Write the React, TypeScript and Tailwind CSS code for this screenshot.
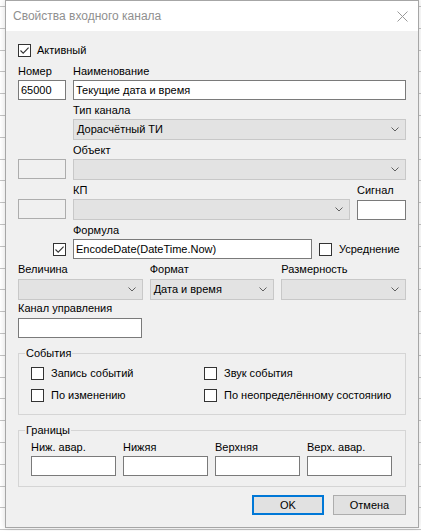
import type { ReactNode } from 'react'

const font = "font-['Segoe_UI','Liberation_Sans',Arial,sans-serif]"

function Check({ checked = false }: { checked?: boolean }) {
  return (
    <span className="w-[13px] h-[13px] border border-[#333333] bg-white flex-shrink-0 flex items-center justify-center">
      {checked && (
        <svg width="11" height="11" viewBox="0 0 11 11" fill="none">
          <path d="M1.5 5.5 L4.2 8.2 L9.6 2.6" stroke="#333333" strokeWidth="1.1" />
        </svg>
      )}
    </span>
  )
}

function Chevron() {
  return (
    <svg width="8" height="5" viewBox="0 0 8 5" fill="none" className="flex-shrink-0">
      <path d="M0.5 0.5 L4 4 L7.5 0.5" stroke="#606060" strokeWidth="1" />
    </svg>
  )
}

function Combo({ value, className = '' }: { value?: string; className?: string }) {
  return (
    <div className={`h-[21px] bg-[#e3e3e3] border border-[#c8c8c8] flex items-center justify-between pl-[3px] pr-[6px] ${className}`}>
      <span>{value}</span>
      <Chevron />
    </div>
  )
}

function TextBox({ value, className = '' }: { value?: string; className?: string }) {
  return (
    <div className={`h-[20px] bg-white border border-[#7a7a7a] flex items-center px-[2px] ${className}`}>
      {value}
    </div>
  )
}

function Label({ children, className = '' }: { children?: ReactNode; className?: string }) {
  return <div className={`h-[15px] leading-[15px] ${className}`}>{children}</div>
}

function CheckLabel({ label, checked }: { label: string; checked?: boolean }) {
  return (
    <div className="h-[16px] flex items-center gap-[7px]">
      <Check checked={checked} />
      <span className="leading-[15px]">{label}</span>
    </div>
  )
}

export default function App() {
  return (
    <div className={`w-[421px] h-[531px] overflow-hidden bg-white bg-[repeating-linear-gradient(to_bottom,transparent_0,transparent_6px,#c4c4c4_6px,#c4c4c4_7px,transparent_7px,transparent_21.8px)] ${font} text-[11px] text-black`}>
      <div className="ml-[5px] w-[414px] h-[528px] border border-[#a6a6a6] bg-[#f0f0f0] shadow-[0_0_6px_rgba(0,0,0,0.15)] flex flex-col">
        {/* title bar */}
        <div className="h-[30px] bg-white flex items-center justify-between pl-[7px] pr-[10px] flex-shrink-0">
          <span className="text-[12px] text-[#8f8f8f]">Свойства входного канала</span>
          <svg width="11" height="11" viewBox="0 0 11 11" fill="none">
            <path d="M0.5 0.5 L10.5 10.5 M10.5 0.5 L0.5 10.5" stroke="#9a9a9a" strokeWidth="1" />
          </svg>
        </div>

        <div className="flex-1 flex flex-col px-[12px]">
          <div className="mt-[12px] h-[15px] flex items-center gap-[6px]">
            <Check checked />
            <span>Активный</span>
          </div>

          <div className="mt-[6px] flex gap-[7px]">
            <Label className="w-[48px]">Номер</Label>
            <Label>Наименование</Label>
          </div>
          <div className="mt-[1px] flex gap-[7px]">
            <TextBox value="65000" className="w-[48px]" />
            <TextBox value="Текущие дата и время" className="flex-1" />
          </div>

          <Label className="mt-[3px] ml-[55px]">Тип канала</Label>
          <Combo value="Дорасчётный ТИ" className="mt-[1px] ml-[55px]" />

          <Label className="mt-[3px] ml-[55px]">Объект</Label>
          <div className="mt-[1px] flex gap-[7px] items-start">
            <div className="w-[48px] h-[20px] border border-[#adadad]" />
            <Combo className="flex-1" />
          </div>

          <div className="mt-[3px] flex gap-[7px]">
            <div className="w-[48px]" />
            <Label className="flex-1">КП</Label>
            <Label className="w-[49px]">Сигнал</Label>
          </div>
          <div className="mt-[1px] flex gap-[7px] items-start">
            <div className="w-[48px] h-[20px] border border-[#adadad]" />
            <Combo className="flex-1" />
            <TextBox className="w-[49px] mt-[1px]" />
          </div>

          <Label className="mt-[3px] ml-[55px]">Формула</Label>
          <div className="mt-[1px] flex items-center">
            <div className="w-[55px] flex justify-end pr-[7px]">
              <Check checked />
            </div>
            <TextBox value="EncodeDate(DateTime.Now)" className="w-[239px]" />
            <div className="ml-[7px]">
              <CheckLabel label="Усреднение" />
            </div>
          </div>

          <div className="mt-[3px] grid grid-cols-3 gap-[7px]">
            <Label>Величина</Label>
            <Label>Формат</Label>
            <Label>Размерность</Label>
          </div>
          <div className="mt-[2px] grid grid-cols-3 gap-[7px]">
            <Combo />
            <Combo value="Дата и время" />
            <Combo />
          </div>

          <Label className="mt-[1px]">Канал управления</Label>
          <TextBox className="mt-[2px] w-[124px]" />

          <fieldset className="mt-[8px] border border-[#d5d5d5] pb-[11px]">
            <legend className="ml-[6px] px-[1px] leading-[15px]">События</legend>
            <div className="mt-[4px] ml-[12px] grid grid-cols-[173px_1fr]">
              <CheckLabel label="Запись событий" />
              <CheckLabel label="Звук события" />
            </div>
            <div className="mt-[6px] ml-[12px] grid grid-cols-[173px_1fr]">
              <CheckLabel label="По изменению" />
              <CheckLabel label="По неопределённому состоянию" />
            </div>
          </fieldset>

          <fieldset className="mt-[8px] border border-[#d5d5d5] pb-[10px]">
            <legend className="ml-[6px] px-[1px] leading-[15px]">Границы</legend>
            <div className="mt-[2px] ml-[12px] grid grid-cols-[85px_85px_85px_85px] gap-x-[7px]">
              <Label>Ниж. авар.</Label>
              <Label>Нижяя</Label>
              <Label>Верхняя</Label>
              <Label>Верх. авар.</Label>
              <TextBox className="mt-[1px]" />
              <TextBox className="mt-[1px]" />
              <TextBox className="mt-[1px]" />
              <TextBox className="mt-[1px]" />
            </div>
          </fieldset>

          <div className="mt-[8px] flex justify-end gap-[9px]">
            <button className="w-[72px] h-[20px] bg-[#e1e1e1] border-2 border-[#0078d7] flex items-center justify-center">
              OK
            </button>
            <button className="w-[73px] h-[20px] bg-[#e1e1e1] border border-[#adadad] flex items-center justify-center">
              Отмена
            </button>
          </div>
        </div>
      </div>
    </div>
  )
}
